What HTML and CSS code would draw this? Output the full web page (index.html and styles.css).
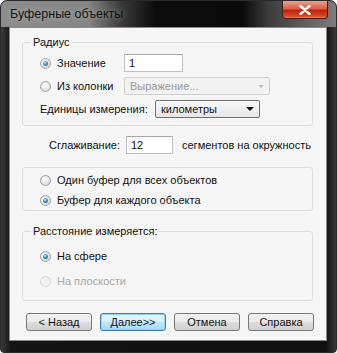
FILE: index.html
```
<!DOCTYPE html>
<html lang="ru">
	<head>
		<meta charset="utf-8">
		<title>Буферные объекты</title>
		<link rel="stylesheet" href="styles.css">
	</head>
	<body>
		<div class="window">
			<div class="titlebar">
				<span class="title">Буферные объекты</span>
				<span class="close">
					<svg width="12" height="10" viewBox="0 0 12 10"><path d="M1.5 1 L10.5 9 M10.5 1 L1.5 9" stroke="#fff" stroke-width="2.4" stroke-linecap="round"/></svg>
				</span>
			</div>
			<div class="client">
				<fieldset class="group group-radius">
					<legend>Радиус</legend>
					<div class="row">
						<label class="radio checked wide"><span class="dot"></span>Значение</label>
						<span class="field value-field">1</span>
					</div>
					<div class="row">
						<label class="radio wide"><span class="dot"></span>Из колонки</label>
						<span class="combo disabled expr">Выражение...<span class="arrow"></span></span>
					</div>
					<div class="row">
						<span class="units-label">Единицы измерения:</span>
						<span class="combo units">километры<span class="arrow"></span></span>
					</div>
				</fieldset>

				<div class="smooth">
					<span class="smooth-label">Сглаживание:</span>
					<span class="field smooth-field">12</span>
					<span class="smooth-text">сегментов на окружность</span>
				</div>

				<fieldset class="group group-mode">
					<div class="row short">
						<label class="radio"><span class="dot"></span>Один буфер для всех объектов</label>
					</div>
					<div class="row short">
						<label class="radio checked"><span class="dot"></span>Буфер для каждого объекта</label>
					</div>
				</fieldset>

				<fieldset class="group group-distance">
					<legend>Расстояние измеряется:</legend>
					<div class="row short">
						<label class="radio checked"><span class="dot"></span>На сфере</label>
					</div>
					<div class="row short">
						<label class="radio disabled"><span class="dot"></span>На плоскости</label>
					</div>
				</fieldset>

				<div class="buttons">
					<span class="btn">&lt; Назад</span>
					<span class="btn default">Далее&gt;&gt;</span>
					<span class="btn">Отмена</span>
					<span class="btn">Справка</span>
				</div>
			</div>
		</div>
	</body>
</html>
```

FILE: styles.css
```
body {
	margin: 0;
	background: #fff;
	font-family: "Liberation Sans", Arial, sans-serif;
	font-size: 11px;
	color: #111;
}
.window {
	width: 337px;
	height: 353px;
	box-sizing: border-box;
	border: 1px solid #2a2a2a;
	border-radius: 7px 7px 4px 4px;
	background: linear-gradient(to right, #3a3a3a 0%, #141414 3%, #101010 97%, #3a3a3a 100%);
	display: flex;
	flex-direction: column;
	overflow: hidden;
}
.titlebar {
	height: 26px;
	flex: none;
	display: flex;
	align-items: flex-start;
	justify-content: space-between;
	background: linear-gradient(to right, #8c8c8c 0%, #858585 26%, #3a3a3a 36%, #0c0c0c 46%, #0a0a0a 72%, #3c3c3c 80%, #7c7c7c 100%);
}
.title {
	margin: 6px 0 0 9px;
	font-size: 12.5px;
	color: #111;
	text-shadow: 0 0 6px rgba(255,255,255,0.45);
}
.close {
	width: 44px;
	height: 17px;
	margin: 0 8px 0 0;
	border: 1px solid #4a1a12;
	border-top: none;
	border-radius: 0 0 4px 4px;
	background: linear-gradient(#eca090 0%, #d8604a 45%, #c0200a 55%, #d64a28 90%, #e88868 100%);
	display: flex;
	align-items: center;
	justify-content: center;
}
.client {
	flex: 1;
	margin: 0 9px 11px 8px;
	border: 1px solid #8a8a8a;
	background: #f6f6f6;
	display: flex;
	flex-direction: column;
	align-items: flex-start;
}
.group {
	margin: 0 0 0 12px;
	width: 291px;
	box-sizing: border-box;
	border: 1px solid #dedede;
	border-radius: 3px;
	padding: 0 0 0 17px;
	display: flex;
	flex-direction: column;
}
.group legend {
	padding: 0 2px;
	margin-left: -9px;
	line-height: 13px;
}
.group-radius {
	margin-top: 8px;
	padding-top: 5px;
	padding-bottom: 7px;
	gap: 5px;
}
.group-mode {
	margin-top: 13px;
	padding-top: 5px;
	padding-bottom: 3px;
	gap: 6px;
}
.group-distance {
	margin-top: 14px;
	padding-top: 11px;
	padding-bottom: 12px;
	gap: 11px;
}
.row {
	height: 18px;
	display: flex;
	align-items: center;
}
.row.short {
	height: 14px;
}
.radio {
	display: flex;
	align-items: center;
	gap: 6px;
}
.radio.wide {
	width: 84px;
}
.radio.disabled {
	color: #a8a8a8;
}
.dot {
	width: 11px;
	height: 11px;
	box-sizing: border-box;
	border-radius: 50%;
	border: 1px solid #a0a0a0;
	background: radial-gradient(circle at 40% 35%, #ffffff 0%, #e8e8e8 50%, #cfcfcf 100%);
	display: flex;
	align-items: center;
	justify-content: center;
}
.radio.checked .dot::after {
	content: "";
	width: 5px;
	height: 5px;
	border-radius: 50%;
	background: radial-gradient(circle at 40% 35%, #b8e6ff 0%, #3a8fd0 50%, #10457e 100%);
}
.radio.disabled .dot {
	border-color: #d6d6d6;
	background: #f1f1f1;
}
.field {
	height: 18px;
	box-sizing: border-box;
	border: 1px solid #c2c2c2;
	border-top-color: #a8a8a8;
	background: #fff;
	padding: 0 4px;
	display: flex;
	align-items: center;
}
.value-field {
	width: 59px;
}
.combo {
	height: 18px;
	box-sizing: border-box;
	border: 1px solid #8a8a8a;
	border-radius: 2px;
	padding: 0 5px 0 5px;
	display: flex;
	align-items: center;
	justify-content: space-between;
}
.combo .arrow {
	width: 0;
	height: 0;
	border-left: 4px solid transparent;
	border-right: 4px solid transparent;
	border-top: 4px solid #111;
}
.combo.disabled {
	border-color: #cfcfcf;
	background: #f3f3f3;
	color: #9a9a9a;
}
.combo.disabled .arrow {
	border-top-color: #bdbdbd;
	border-left-width: 3px;
	border-right-width: 3px;
	border-top-width: 3px;
}
.expr {
	width: 146px;
}
.units-label {
	width: 115px;
}
.units {
	width: 105px;
	background: linear-gradient(#fafafa, #e6e6e6);
	border-color: #707070;
}
.smooth {
	margin: 10px 0 0 39px;
	height: 18px;
	display: flex;
	align-items: center;
}
.smooth-label {
	width: 77px;
}
.smooth-field {
	width: 47px;
	margin-right: 9px;
}
.buttons {
	margin: 12px 0 0 16px;
	display: flex;
	gap: 8px;
}
.btn {
	width: 66px;
	height: 18px;
	box-sizing: border-box;
	border: 1px solid #777;
	border-radius: 3px;
	background: linear-gradient(#f4f4f4 0%, #ebebeb 48%, #dcdcdc 52%, #d0d0d0 100%);
	display: flex;
	align-items: center;
	justify-content: center;
}
.btn.default {
	border-color: #3c7fb1;
	background: linear-gradient(#eaf6fd 0%, #d9f0fc 48%, #bee6fd 52%, #a7d9f5 100%);
	box-shadow: inset 0 0 0 1px #8fd0f5;
}
```
